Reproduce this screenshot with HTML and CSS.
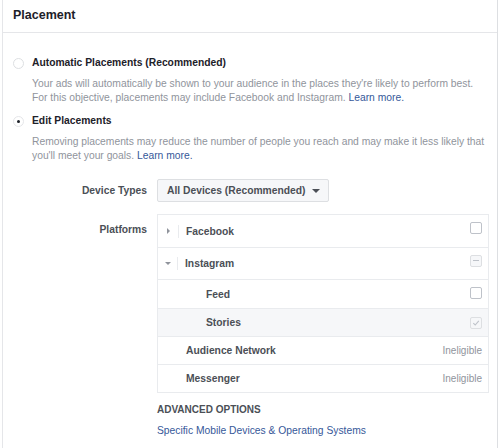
FILE: index.html
```html
<!DOCTYPE html>
<html>
<head>
<meta charset="utf-8">
<link rel="stylesheet" href="styles.css">
</head>
<body>
<div class="card">
  <div class="header">Placement</div>
  <div class="content">
    <div class="option">
      <span class="radio"></span>
      <div class="option-text">
        <div class="option-title">Automatic Placements (Recommended)</div>
        <div class="desc">Your ads will automatically be shown to your audience in the places they're likely to perform best.<br>For this objective, placements may include Facebook and Instagram. <a class="link">Learn more.</a></div>
      </div>
    </div>
    <div class="option option-edit">
      <span class="radio checked"></span>
      <div class="option-text">
        <div class="option-title">Edit Placements</div>
        <div class="desc">Removing placements may reduce the number of people you reach and may make it less likely that<br>you'll meet your goals. <a class="link">Learn more.</a></div>
      </div>
    </div>

    <div class="form-row device-row">
      <div class="form-label">Device Types</div>
      <div><button class="dropdown">All Devices (Recommended) <span class="caret"></span></button></div>
    </div>

    <div class="form-row platforms-row">
      <div class="form-label platforms-label">Platforms</div>
      <div class="table">
        <div class="row r-facebook">
          <span class="tri tri-right"></span><span class="vsep"></span>
          <span class="name">Facebook</span>
          <span class="cb"></span>
        </div>
        <div class="row r-instagram">
          <span class="tri tri-down"></span><span class="vsep"></span>
          <span class="name">Instagram</span>
          <span class="cb cb-disabled cb-minus"></span>
        </div>
        <div class="row r-feed sub">
          <span class="name">Feed</span>
          <span class="cb"></span>
        </div>
        <div class="row r-stories sub shaded">
          <span class="name">Stories</span>
          <span class="cb cb-disabled cb-check">
            <svg width="8" height="8" viewBox="0 0 8 8"><path d="M1.3 4.2 L3.2 6 L6.8 1.8" fill="none" stroke="#bec2c9" stroke-width="1.1"/></svg>
          </span>
        </div>
        <div class="row r-audience plain">
          <span class="name">Audience Network</span>
          <span class="inel">Ineligible</span>
        </div>
        <div class="row r-messenger plain">
          <span class="name">Messenger</span>
          <span class="inel">Ineligible</span>
        </div>
      </div>
    </div>

    <div class="advanced">
      <div class="adv-title">ADVANCED OPTIONS</div>
      <a class="link adv-link">Specific Mobile Devices &amp; Operating Systems</a>
    </div>
  </div>
</div>
</body>
</html>
```
FILE: styles.css
```css
html, body {
  margin: 0;
  padding: 0;
  background: #ffffff;
}
body {
  font-family: "Liberation Sans", Arial, Helvetica, sans-serif;
  color: #4b4f56;
  width: 500px;
  height: 448px;
  overflow: hidden;
}
.card {
  margin-left: 2px;
  width: 494px;
  height: 460px;
  border-left: 1px solid #e5e6e9;
  border-right: 1px solid #dddfe2;
  background: #fff;
}
.header {
  height: 33px;
  box-sizing: border-box;
  border-bottom: 1px solid #e5e6e9;
  padding-left: 10px;
  display: flex;
  align-items: center;
  font-size: 12.5px;
  font-weight: bold;
  color: #1d2129;
  padding-bottom: 3px;
}
.content {
  padding: 23px 0 0 0;
}
.option {
  display: flex;
  align-items: flex-start;
  padding-left: 10px;
}
.option-edit {
  margin-top: 9px;
}
.radio {
  width: 11px;
  height: 11px;
  box-sizing: border-box;
  border: 1px solid #dddfe2;
  border-radius: 50%;
  margin-top: 2px;
  margin-right: 8px;
  background: #fff;
  flex: none;
  position: relative;
}
.radio.checked {
  border-color: #e5e6e9;
}
.radio.checked::after {
  content: "";
  position: absolute;
  left: 3px;
  top: 3px;
  width: 3px;
  height: 3px;
  border-radius: 50%;
  background: #1d2129;
}
.option-title {
  font-size: 10.3px;
  font-weight: bold;
  color: #1d2129;
  line-height: 14px;
}
.desc {
  margin-top: 7px;
  font-size: 10.3px;
  line-height: 14px;
  color: #90949c;
  width: 470px;
}
.link {
  color: #365899;
  text-decoration: none;
}
.form-row {
  display: grid;
  grid-template-columns: 144px 1fr;
  column-gap: 10px;
  align-items: center;
}
.device-row {
  margin-top: 16px;
}
.form-label {
  text-align: right;
  font-size: 10.3px;
  font-weight: bold;
  color: #4b4f56;
}
.dropdown {
  height: 23px;
  width: 172px;
  box-sizing: border-box;
  border: 1px solid #dddfe2;
  border-radius: 2px;
  background: #f6f7f9;
  font-family: "Liberation Sans", Arial, sans-serif;
  font-size: 10.3px;
  font-weight: bold;
  color: #4b4f56;
  padding: 0 0 0 9px;
  text-align: left;
  display: flex;
  align-items: center;
}
.caret {
  display: inline-block;
  width: 0;
  height: 0;
  border-left: 4px solid transparent;
  border-right: 4px solid transparent;
  border-top: 4px solid #4b4f56;
  margin-left: 7px;
  margin-top: 1px;
}
.platforms-row {
  margin-top: 12px;
  align-items: start;
}
.platforms-label {
  padding-top: 10px;
}
.table {
  width: 332px;
  box-sizing: border-box;
  border: 1px solid #e9ebee;
}
.row {
  display: flex;
  align-items: center;
  height: 28px;
  box-sizing: border-box;
  border-top: 1px solid #e9ebee;
  padding: 0 6px 0 7px;
  font-size: 10.3px;
  font-weight: bold;
  color: #4b4f56;
}
.row:first-child {
  border-top: none;
}
.r-facebook { height: 32px; }
.r-instagram { height: 32px; }
.r-feed { height: 29px; }
.row.shaded { background: #f6f7f9; }
.row.sub .name { padding-left: 41px; }
.row.plain .name { padding-left: 21px; }
.tri {
  width: 0;
  height: 0;
  flex: none;
}
.tri-right {
  margin-left: 2px;
  margin-right: 3px;
  border-top: 3px solid transparent;
  border-bottom: 3px solid transparent;
  border-left: 3px solid #90949c;
}
.tri-down {
  margin-right: 1px;
  border-left: 3.5px solid transparent;
  border-right: 3.5px solid transparent;
  border-top: 3px solid #90949c;
}
.vsep {
  width: 1px;
  height: 13px;
  background: #e9ebee;
  margin-left: 5px;
  margin-right: 7px;
  flex: none;
}
.name {
  flex: 1;
}
.cb {
  width: 12px;
  height: 12px;
  box-sizing: border-box;
  border: 1px solid #bec2c9;
  border-radius: 2px;
  background: #fff;
  margin-top: -6px;
  position: relative;
  display: flex;
  align-items: center;
  justify-content: center;
}
.r-feed .cb { margin-top: -2px; }
.cb-disabled {
  border-color: #dddfe2;
  background: #f6f7f9;
}
.cb-minus::after {
  content: "";
  width: 6px;
  height: 1px;
  background: #bec2c9;
}
.r-stories .cb { margin-top: 0; }
.inel {
  font-weight: normal;
  color: #90949c;
  font-size: 10px;
}
.advanced {
  padding-left: 154px;
  margin-top: 10px;
}
.adv-title {
  font-size: 10px;
  font-weight: bold;
  color: #4b4f56;
  line-height: 13px;
}
.adv-link {
  display: block;
  margin-top: 8px;
  font-size: 10.3px;
  line-height: 13px;
}
```
